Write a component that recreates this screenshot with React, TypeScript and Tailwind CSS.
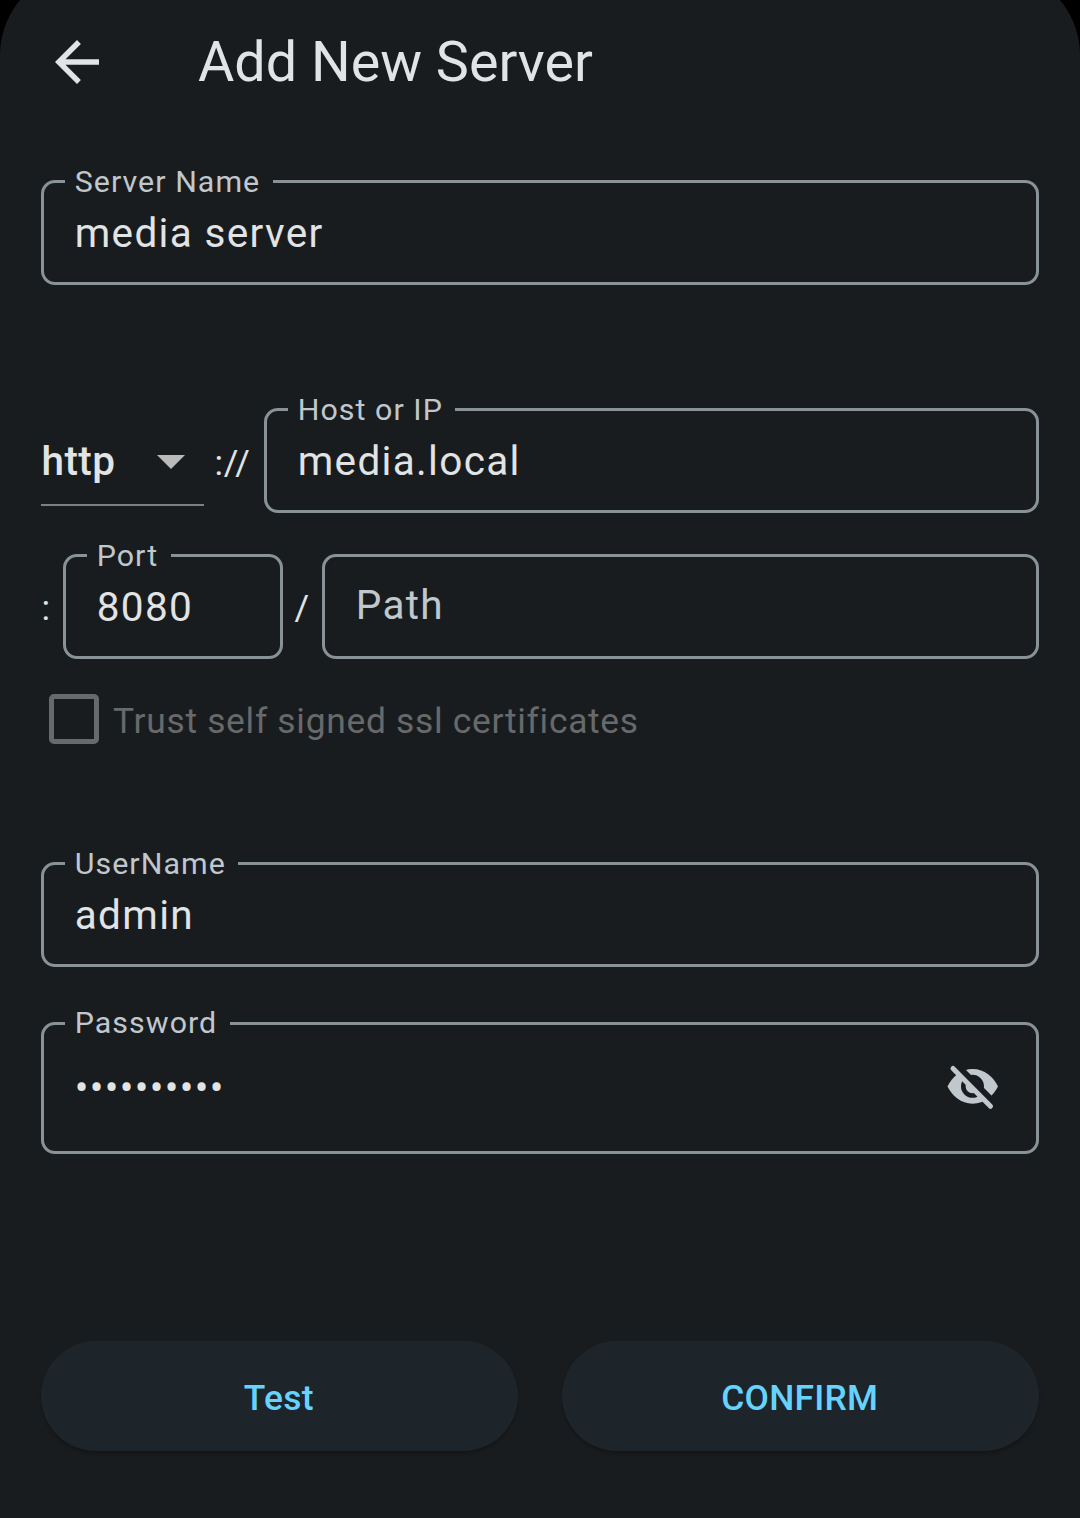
import type { ReactNode } from "react";

type FieldProps = {
  label?: string;
  labelTop?: string;
  className: string;
  children: ReactNode;
};

function OutlinedField({ label, labelTop = "-top-[19px]", className, children }: FieldProps) {
  return (
    <div
      className={`relative flex items-center rounded-[14px] border-[3px] border-[#899296] pl-[30.75px] text-[40.5px] leading-[48px] tracking-[1.33px] text-[#e1e3e5] ${className}`}
    >
      {label && (
        <span
          className={`absolute left-[21px] bg-[#191c1e] pr-[12.5px] pl-[9.75px] text-[30.4px] leading-[36px] tracking-[1.03px] text-[#c0c7cd] ${labelTop}`}
        >
          {label}
        </span>
      )}
      {children}
    </div>
  );
}

function BackArrow() {
  return (
    <svg width="66" height="66" viewBox="0 0 24 24" fill="#e1e3e5" aria-label="Back">
      <path d="M20 11H7.83l5.59-5.59L12 4l-8 8 8 8 1.41-1.41L7.83 13H20v-2z" />
    </svg>
  );
}

function EyeSlash() {
  return (
    <svg width="66" height="60" viewBox="0 0 66 60" fill="none" aria-label="Show password">
      <path
        d="M7.5 28.5C12 19 21 11 32.7 11S53.5 19 58 28.5C53.5 37.5 44.5 45.7 32.7 45.7S12 37.5 7.5 28.5Z"
        fill="#c0c7cd"
      />
      <circle cx="32.5" cy="28.3" r="9.200" stroke="#191c1e" strokeWidth="4.6" />
      <path d="M17.500 8.500L55.500 46.500" stroke="#191c1e" strokeWidth="7" />
      <path d="M13 10.500L50.500 48.300" stroke="#c0c7cd" strokeWidth="5" strokeLinecap="round" />
    </svg>
  );
}

export default function App() {
  return (
    <div className="h-[1518px] w-[1080px] overflow-hidden bg-black font-['Roboto',sans-serif]">
      <div className="-mt-[30px] flex h-[1548px] flex-col rounded-t-[85px] bg-[#191c1e] px-[41px] pt-[30px]">
        <header className="flex h-[124px] items-center gap-[88px] pl-[3px]">
          <BackArrow />
          <h1 className="text-[55.7px] leading-[64px] text-[#e1e3e5]">Add New Server</h1>
        </header>

        <OutlinedField label="Server Name" className="mt-[56px] h-[105px] pt-px">
          media server
        </OutlinedField>

        <div className="mt-[123px] flex h-[105px]">
          <div className="mt-[8px] flex h-[90px] w-[163px] items-center justify-between border-b-2 border-[#7d7f80] pr-[19.5px]">
            <span className="pt-px pl-[0.5px] text-[40.5px] leading-[48px] font-medium tracking-[0.4px] text-[#e1e3e5]">
              http
            </span>
            <svg className="mt-[3px]" width="28" height="14" viewBox="0 0 28 14" fill="#bababb">
              <path d="M0 0H28L14 14Z" />
            </svg>
          </div>
          <span className="w-[60px] pt-[35px] pl-[10.5px] text-[35.4px] leading-[40px] tracking-[0.7px] text-[#e1e3e5]">
            ://
          </span>
          <OutlinedField label="Host or IP" className="flex-1 pt-px">
            media.local
          </OutlinedField>
        </div>

        <div className="mt-[41px] flex h-[105px]">
          <span className="w-[22px] pt-[34px] pl-[0.5px] text-[35.4px] leading-[40px] text-[#e1e3e5]">:</span>
          <OutlinedField label="Port" className="w-[220px] pt-px">
            8080
          </OutlinedField>
          <span className="w-[39px] pt-[34px] pl-[11.5px] text-[35.4px] leading-[40px] text-[#e1e3e5]">/</span>
          <OutlinedField className="flex-1 pb-[3px]">
            <span className="text-[#c0c7cd]">Path</span>
          </OutlinedField>
        </div>

        <label className="mt-[35px] flex h-[50px] items-center gap-[14px] pl-[8px]">
          <span className="size-[50px] rounded-[5px] border-[5px] border-[#67696b]" />
          <span className="pt-[3px] text-[35.4px] leading-[42px] tracking-[0.7px] text-[#67696b]">
            Trust self signed ssl certificates
          </span>
        </label>

        <OutlinedField label="UserName" className="mt-[118px] h-[105px] pt-px">
          admin
        </OutlinedField>

        <OutlinedField
          label="Password"
          labelTop="-top-[20px]"
          className="mt-[55px] h-[132px] justify-between pr-[30px]"
        >
          <span>••••••••••</span>
          <EyeSlash />
        </OutlinedField>

        <div className="mt-[187px] grid h-[110px] grid-cols-2 gap-[44px] text-[35.4px] leading-[42px] font-medium tracking-[0.25px] text-[#66d3ff]">
          <button className="rounded-full bg-[#1d252a] pt-[3px] pr-[1.5px] shadow-[0_3px_3px_rgba(0,0,0,0.22)]">
            Test
          </button>
          <button className="rounded-full bg-[#1d252a] pt-[3px] pr-[1.5px] shadow-[0_3px_3px_rgba(0,0,0,0.22)]">
            CONFIRM
          </button>
        </div>
      </div>
    </div>
  );
}
